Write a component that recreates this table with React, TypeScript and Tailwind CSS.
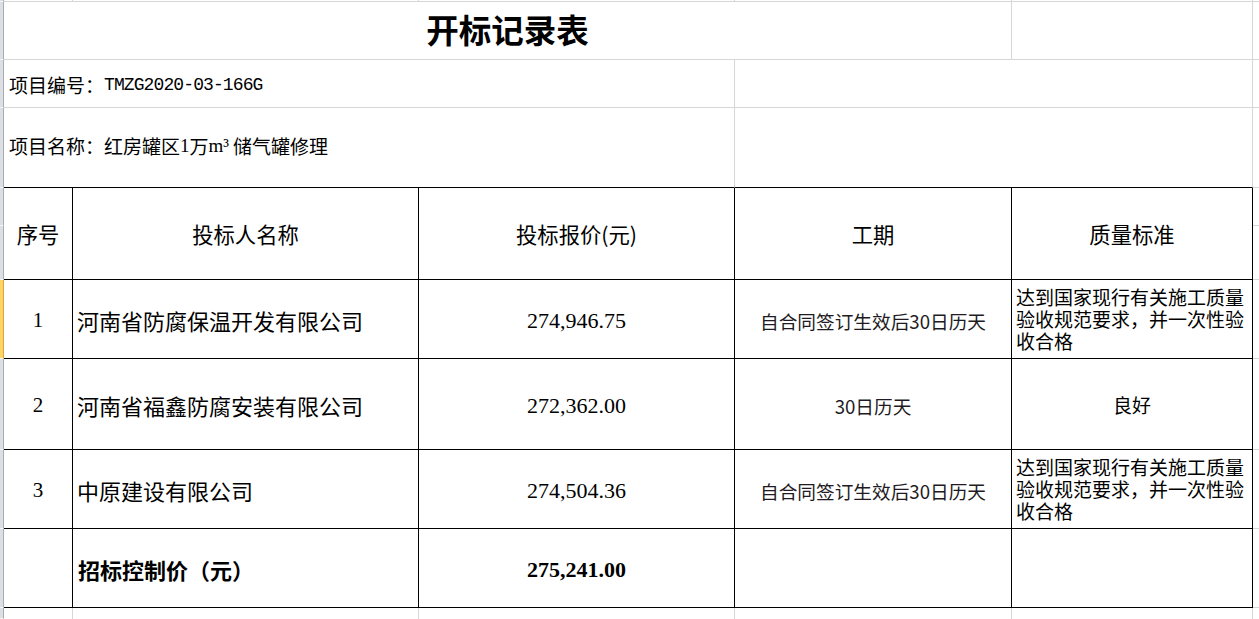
import React from "react";

// row header strip on the far left (spreadsheet look)
const Strip = ({ h, active }: { h: string; active?: boolean }) => (
  <div
    className={
      active
        ? `w-[4px] shrink-0 ${h} bg-[#fdd466] border-r border-r-[#e0a43a] border-b border-b-[#f4f4f4]`
        : `w-[4px] shrink-0 ${h} bg-[#dcdfe3] border-r border-r-[#a7abb0] border-b border-b-[#f4f4f4]`
    }
  />
);

const cjk = "font-['Noto_Sans_CJK_SC',sans-serif]";
const serif = "font-['Liberation_Serif','Noto_Sans_CJK_SC',serif]";

const ROWS = [
  {
    no: "1",
    name: "河南省防腐保温开发有限公司",
    price: "274,946.75",
    period: "自合同签订生效后30日历天",
    quality: ["达到国家现行有关施工质量", "验收规范要求，并一次性验", "收合格"],
    h: "h-[79px]",
    active: true,
  },
  {
    no: "2",
    name: "河南省福鑫防腐安装有限公司",
    price: "272,362.00",
    period: "30日历天",
    quality: ["良好"],
    h: "h-[91px]",
  },
  {
    no: "3",
    name: "中原建设有限公司",
    price: "274,504.36",
    period: "自合同签订生效后30日历天",
    quality: ["达到国家现行有关施工质量", "验收规范要求，并一次性验", "收合格"],
    h: "h-[79px]",
  },
];

export default function App() {
  return (
    <div className={`w-[1259px] h-[619px] overflow-hidden bg-white text-black ${cjk}`}>
      {/* top sliver of the previous row */}
      <div className="flex h-[2px]">
        <Strip h="h-[2px]" />
        <div className="w-[69px] shrink-0 border-r border-b border-[#d6d6d6]" />
        <div className="w-[346px] shrink-0 border-r border-b border-[#d6d6d6]" />
        <div className="w-[316px] shrink-0 border-r border-b border-[#d6d6d6]" />
        <div className="w-[277px] shrink-0 border-r border-b border-[#d6d6d6]" />
        <div className="w-[241px] shrink-0 border-r border-b border-[#d6d6d6]" />
        <div className="w-[6px] shrink-0 border-b border-[#d6d6d6]" />
      </div>

      {/* title */}
      <div className="flex h-[58px]">
        <Strip h="h-[58px]" />
        <div className="w-[1008px] shrink-0 border-r border-b border-[#d6d6d6] flex items-center justify-center text-[32.5px] font-bold pb-[2px]">
          开标记录表
        </div>
        <div className="w-[241px] shrink-0 border-r border-b border-[#d6d6d6]" />
        <div className="w-[6px] shrink-0 border-b border-[#d6d6d6]" />
      </div>

      {/* project no */}
      <div className="flex h-[48px]">
        <Strip h="h-[48px]" />
        <div className="w-[731px] shrink-0 border-r border-b border-[#d6d6d6] flex items-center pl-[5px] pt-[3px] text-[19px]">
          <span>项目编号：</span>
          <span className="font-['Liberation_Mono',monospace] text-[18px] tracking-[-0.9px]">TMZG2020-03-166G</span>
        </div>
        <div className="w-[518px] shrink-0 border-r border-b border-[#d6d6d6]" />
        <div className="w-[6px] shrink-0 border-b border-[#d6d6d6]" />
      </div>

      {/* project name */}
      <div className="flex h-[80px]">
        <Strip h="h-[80px]" />
        <div className="w-[731px] shrink-0 border-r border-r-[#d6d6d6] border-b border-b-black flex items-center pl-[5px] pb-[2px] text-[19px]">
          <span>项目名称：红房罐区</span>
          <span className={serif}>1</span>
          <span>万</span>
          <span className={`${serif} mr-[4px]`}>m³</span>
          <span>储气罐修理</span>
        </div>
        <div className="w-[518px] shrink-0 border-r border-r-[#d6d6d6] border-b border-b-black" />
        <div className="w-[6px] shrink-0 border-b border-[#d6d6d6]" />
      </div>

      {/* header */}
      <div className="flex h-[92px] text-[21.33px]">
        <div className="flex flex-col w-[4px] shrink-0">
          <Strip h="h-[38px]" />
          <Strip h="h-[54px]" />
        </div>
        <div className="w-[69px] shrink-0 border-r border-b border-black flex items-center justify-center">序号</div>
        <div className="w-[346px] shrink-0 border-r border-b border-black flex items-center justify-center">投标人名称</div>
        <div className="w-[316px] shrink-0 border-r border-b border-black flex items-center justify-center">投标报价(元)</div>
        <div className="w-[277px] shrink-0 border-r border-b border-black flex items-center justify-center">工期</div>
        <div className="w-[241px] shrink-0 border-r border-b border-black flex items-center justify-center">质量标准</div>
        <div className="flex flex-col w-[6px] shrink-0">
          <div className="h-[38px] border-b border-[#d6d6d6]" />
          <div className="h-[54px] border-b border-[#d6d6d6]" />
        </div>
      </div>

      {ROWS.map((r) => (
        <div key={r.no} className={`flex ${r.h}`}>
          <Strip h={r.h} active={r.active} />
          <div className={`w-[69px] shrink-0 border-r border-b border-black flex items-center justify-center pt-[4px] text-[21px] ${serif}`}>
            {r.no}
          </div>
          <div className="w-[346px] shrink-0 border-r border-b border-black flex items-center pl-[4px] pt-[3px] text-[22px]">
            {r.name}
          </div>
          <div className={`w-[316px] shrink-0 border-r border-b border-black flex items-center justify-center pt-[3px] text-[22px] ${serif}`}>
            {r.price}
          </div>
          <div className="w-[277px] shrink-0 border-r border-b border-black flex items-center justify-center pt-[3px] text-[18.67px] text-[#221a22]">
            {r.period}
          </div>
          {r.quality.length > 1 ? (
            <div className="w-[241px] shrink-0 border-r border-b border-black flex flex-col justify-center pl-[4px] text-[19px] leading-[22px] pb-[1px]">
              {r.quality.map((l) => (
                <div key={l} className="whitespace-nowrap">{l}</div>
              ))}
            </div>
          ) : (
            <div className="w-[241px] shrink-0 border-r border-b border-black flex items-center justify-center pt-[3px] text-[19px]">
              {r.quality[0]}
            </div>
          )}
          <div className="w-[6px] shrink-0 border-b border-[#d6d6d6]" />
        </div>
      ))}

      {/* control price */}
      <div className="flex h-[79px]">
        <Strip h="h-[79px]" />
        <div className="w-[69px] shrink-0 border-r border-b border-black" />
        <div className="w-[346px] shrink-0 border-r border-b border-black flex items-center pl-[5px] pt-[3px] text-[22px] font-bold">
          招标控制价（元）
        </div>
        <div className={`w-[316px] shrink-0 border-r border-b border-black flex items-center justify-center pt-[3px] text-[22px] font-bold ${serif}`}>
          275,241.00
        </div>
        <div className="w-[277px] shrink-0 border-r border-b border-black" />
        <div className="w-[241px] shrink-0 border-r border-b border-black" />
        <div className="w-[6px] shrink-0 border-b border-[#d6d6d6]" />
      </div>

      {/* next empty row */}
      <div className="flex h-[11px]">
        <Strip h="h-[11px]" />
        <div className="w-[69px] shrink-0 border-r border-[#d6d6d6]" />
        <div className="w-[346px] shrink-0 border-r border-[#d6d6d6]" />
        <div className="w-[316px] shrink-0 border-r border-[#d6d6d6]" />
        <div className="w-[277px] shrink-0 border-r border-[#d6d6d6]" />
        <div className="w-[241px] shrink-0 border-r border-[#d6d6d6]" />
        <div className="w-[6px] shrink-0" />
      </div>
    </div>
  );
}
